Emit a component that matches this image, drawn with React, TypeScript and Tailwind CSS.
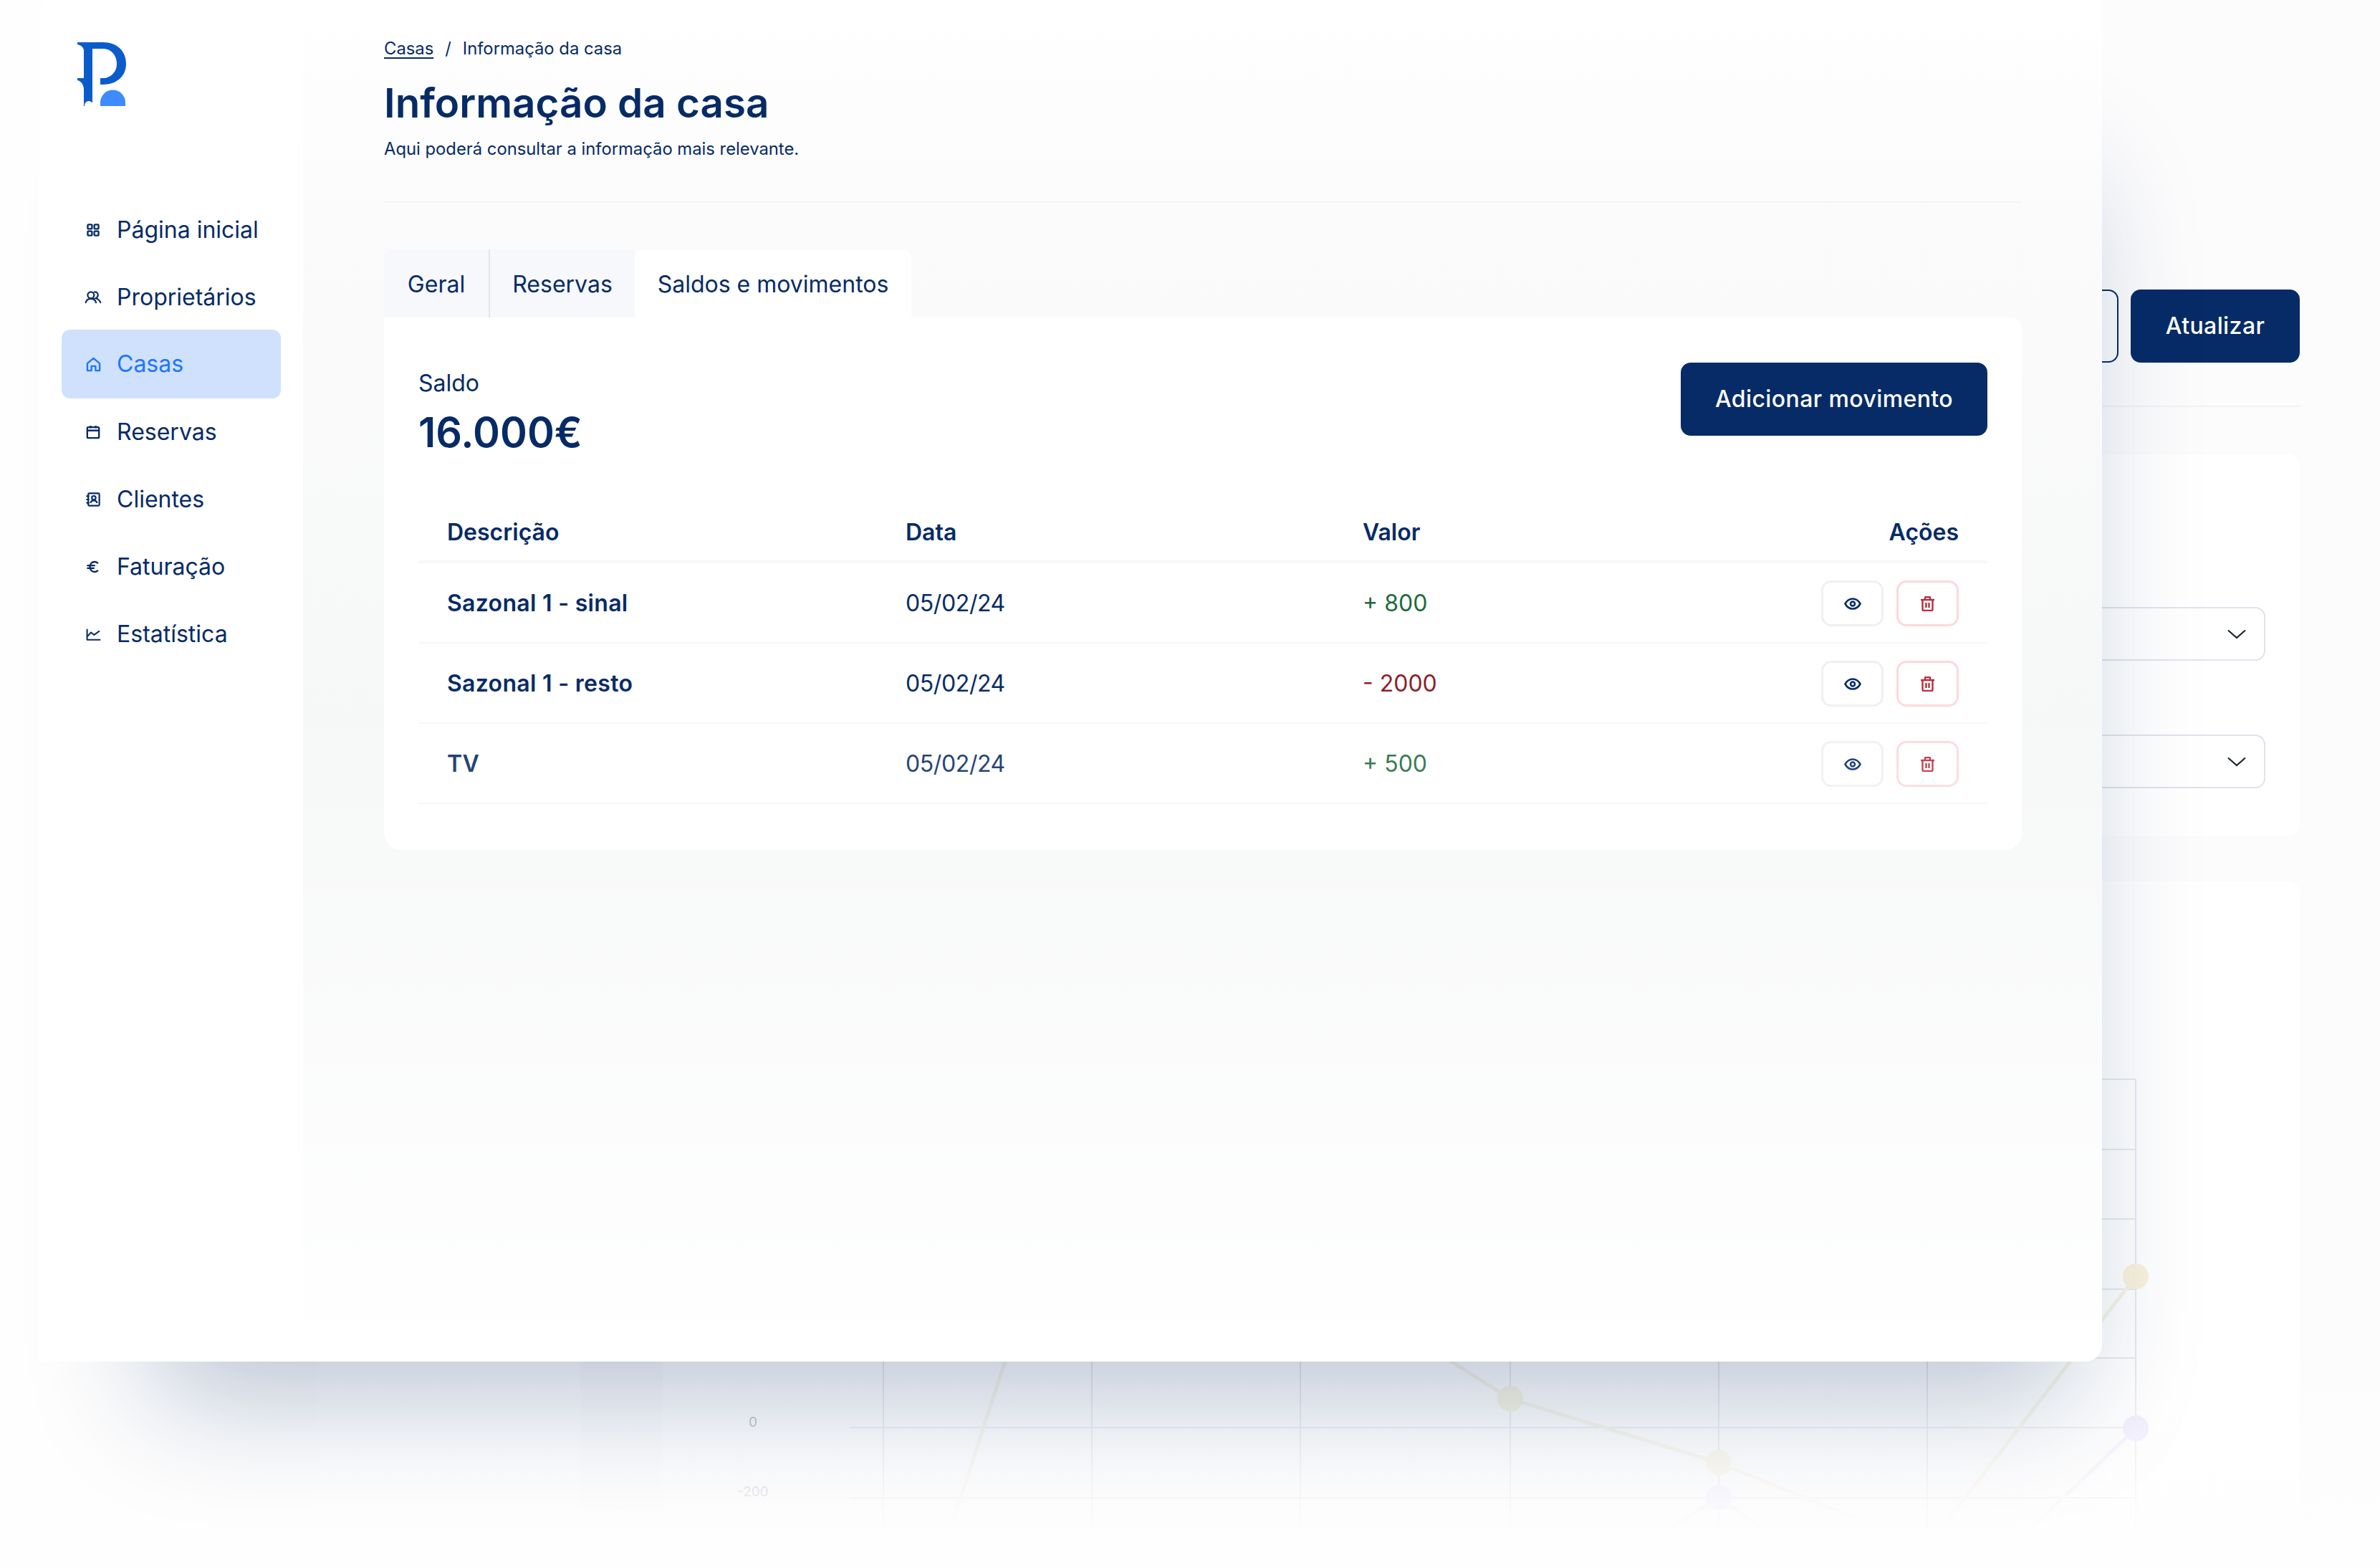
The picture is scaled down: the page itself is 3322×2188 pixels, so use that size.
import React from "react";

const NAVY = "#062b66";

function Logo() {
  return (
    <svg width="68" height="89" viewBox="0 0 68 89" className="block">
      <path
        fill="#0b5ccb"
        d="M0 0H36C55 0 68 12 68 30C68 48 54 59 36 59H32V50H36C46 50 55 42 55 30C55 18 47 9 36 9H21V89H9V66C9 59 5 54 0 53V50H9V12C9 7 5 4 0 3Z"
      />
      <circle cx="16" cy="88" r="6" fill="#ffffff" />
      <path fill="#3d8bff" d="M32 89V84A17.5 17.5 0 0 1 67 84V89Z" />
    </svg>
  );
}

type IconProps = { color?: string };

function GridIcon({ color = NAVY }: IconProps) {
  return (
    <svg width="18" height="18" viewBox="0 0 20 20" fill="none" stroke={color} strokeWidth="2.6">
      <rect x="1.6" y="1.6" width="6.6" height="6.6" rx="1" />
      <rect x="11.8" y="1.6" width="6.6" height="6.6" rx="1" />
      <rect x="1.6" y="11.8" width="6.6" height="6.6" rx="1" />
      <rect x="11.8" y="11.8" width="6.6" height="6.6" rx="1" />
    </svg>
  );
}

function UsersIcon({ color = NAVY }: IconProps) {
  return (
    <svg width="24" height="18" viewBox="0 0 26 20" fill="none" stroke={color} strokeWidth="2.4" strokeLinecap="round">
      <circle cx="9.5" cy="6.5" r="5" />
      <path d="M1.5 18C2.5 14 5.5 12 9.5 12S16.5 14 17.5 18" />
      <path d="M15 1.6C18 1 20.5 3.2 20.5 6.2C20.5 8.8 19 10.6 16.8 11.4C20 12 23 14.4 24.5 18" />
    </svg>
  );
}

function HomeIcon({ color = NAVY }: IconProps) {
  return (
    <svg width="21" height="21" viewBox="0 0 22 22" fill="none" stroke={color} strokeWidth="2.5" strokeLinejoin="round">
      <path d="M2 9.5L11 2L20 9.5V20H14V13.5H8V20H2Z" />
    </svg>
  );
}

function CalendarIcon({ color = NAVY }: IconProps) {
  return (
    <svg width="20" height="20" viewBox="0 0 22 22" fill="none" stroke={color} strokeWidth="2.6">
      <rect x="2" y="3.5" width="18" height="16.5" rx="1.5" />
      <path d="M2 8.5H20M7 1V5M15 1V5" />
    </svg>
  );
}

function ContactIcon({ color = NAVY }: IconProps) {
  return (
    <svg width="20" height="20" viewBox="0 0 22 22" fill="none" stroke={color} strokeWidth="2.4">
      <rect x="3.5" y="1.5" width="17" height="19" rx="1.5" />
      <circle cx="12" cy="8.5" r="3" />
      <path d="M7 16.5C7.5 13.5 9.5 12.5 12 12.5S16.5 13.5 17 16.5M0.5 6H5M0.5 11H5M0.5 16H5" />
    </svg>
  );
}

function EuroIcon({ color = NAVY }: IconProps) {
  return (
    <svg width="18" height="18" viewBox="0 0 20 20" fill="none" stroke={color} strokeWidth="2.6" strokeLinecap="round">
      <path d="M17 4C15.6 2.8 14 2.2 12.2 2.2C8 2.2 5 5.6 5 10S8 17.8 12.2 17.8C14 17.8 15.6 17.2 17 16" />
      <path d="M1.5 8H12M1.5 12H11" />
    </svg>
  );
}

function ChartIcon({ color = NAVY }: IconProps) {
  return (
    <svg width="21" height="17" viewBox="0 0 24 20" fill="none" stroke={color} strokeWidth="2.4" strokeLinejoin="round">
      <path d="M1.5 1V18.5H23.5" />
      <path d="M2 13L8 6.5L13 10.5L22 4" />
    </svg>
  );
}

function EyeIcon() {
  return (
    <svg width="24" height="17" viewBox="0 0 24 17" fill="none" stroke={NAVY} strokeWidth="2.6">
      <path d="M1.5 8.5C4 4 7.5 1.5 12 1.5S20 4 22.5 8.5C20 13 16.5 15.5 12 15.5S4 13 1.5 8.5Z" />
      <circle cx="12" cy="8.5" r="3" />
    </svg>
  );
}

function TrashIcon() {
  return (
    <svg width="19" height="21" viewBox="0 0 19 21" fill="none" stroke="#b92c3c" strokeWidth="2.4">
      <path d="M0 5H19" />
      <path d="M6 4.5V2C6 1.4 6.4 1 7 1H12C12.6 1 13 1.4 13 2V4.5" />
      <path d="M2.5 5V18.5C2.5 19.3 3 20 4 20H15C16 20 16.5 19.3 16.5 18.5V5" />
      <path d="M7.5 9V16M11.5 9V16" />
    </svg>
  );
}

function Chevron() {
  return (
    <svg width="26" height="14" viewBox="0 0 26 14" fill="none" stroke="#1c2430" strokeWidth="2.2">
      <path d="M1 1.5L13 12L25 1.5" />
    </svg>
  );
}

const nav = [
  { label: "Página inicial", Icon: GridIcon },
  { label: "Proprietários", Icon: UsersIcon },
  { label: "Casas", Icon: HomeIcon, active: true },
  { label: "Reservas", Icon: CalendarIcon },
  { label: "Clientes", Icon: ContactIcon },
  { label: "Faturação", Icon: EuroIcon },
  { label: "Estatística", Icon: ChartIcon },
];

const rows = [
  { d: "Sazonal 1 - sinal", date: "05/02/24", v: "+ 800", c: "text-[#1d6a3b]" },
  { d: "Sazonal 1 - resto", date: "05/02/24", v: "- 2000", c: "text-[#8f1d2b]" },
  { d: "TV", date: "05/02/24", v: "+ 500", c: "text-[#1d6a3b]" },
];

function BackChart() {
  const hs = [7, 105, 202, 300, 396, 493, 591];
  const vs = [233, 524, 815, 1108, 1399, 1690, 1981];
  return (
    <svg width="2000" height="688" viewBox="0 0 2000 688" className="block" fill="none">
      {hs.map((y) => (
        <path key={y} d={`M186 ${y}H1981`} stroke="#e6e9ee" strokeWidth="2" />
      ))}
      {vs.map((x) => (
        <path key={x} d={`M${x} 7V688`} stroke="#e6e9ee" strokeWidth="2" />
      ))}
      <path d="M403 400L315 670" stroke="#f8f5e8" strokeWidth="5" />
      <path d="M930 340L1108 453L1399 542L1690 660" stroke="#f8f5e6" strokeWidth="5" />
      <path d="M1690 660L1981 282" stroke="#f8f5e6" strokeWidth="5" />
      <path d="M1981 494L1778 688M1399 591L1248 688M1399 591L1537 688" stroke="#f0eefc" strokeWidth="5" />
      <circle cx="1981" cy="282" r="18" fill="#f9f3dc" />
      <circle cx="1108" cy="453" r="18" fill="#f8f5e0" />
      <circle cx="1399" cy="542" r="18" fill="#f9f5e2" />
      <circle cx="1981" cy="494" r="18" fill="#eceafd" />
      <circle cx="1399" cy="591" r="18" fill="#eceafd" />
      <text x="51" y="492" textAnchor="middle" fontSize="19" fill="#a6acb5" fontFamily="Inter, sans-serif">0</text>
      <text x="51" y="589" textAnchor="middle" fontSize="19" fill="#a6acb5" fontFamily="Inter, sans-serif">-200</text>
    </svg>
  );
}

function BackWindow() {
  return (
    <div className="absolute inset-0 flex flex-col items-end pl-[443px] pr-[112px] pt-[404px]">
      <div className="flex gap-[17px] h-[102px]">
        <div className="w-[300px] rounded-[14px] border-2 border-[#062b66]" />
        <div className="w-[236px] rounded-[14px] bg-[#062b66] text-white text-[32px] tracking-[0.4px] font-medium flex items-center justify-center">
          Atualizar
        </div>
      </div>
      <div className="mt-[60px] w-full h-[2px] bg-[#f1f2f5]" />
      <div className="mt-[66px] w-full h-[532px] rounded-[16px] bg-white flex flex-col items-end pt-[213px] pr-[48px] gap-[103px] shrink-0">
        {[0, 1].map((i) => (
          <div key={i} className="w-[1000px] h-[75px] rounded-[14px] border-2 border-[#dfe3ec] flex items-center justify-end pr-[25px]">
            <Chevron />
          </div>
        ))}
      </div>
      <div className="mt-[64px] w-full flex-1 flex gap-[115px] min-h-0">
        <div className="w-[367px] bg-white" />
        <div className="flex-1 bg-white rounded-t-[16px] pt-[269px] pl-[75px] overflow-hidden">
          <BackChart />
        </div>
      </div>
    </div>
  );
}

export default function App() {
  return (
    <div className="relative w-[3322px] h-[2188px] overflow-hidden bg-[#fcfcfd] [font-family:Inter,sans-serif] text-[#062b66]">
      <div className="absolute inset-y-0 left-0 w-[443px] bg-[#fefefe]" />
      <BackWindow />
      <div className="absolute left-0 right-0 bottom-0 h-[288px] bg-[linear-gradient(to_bottom,rgba(254,254,254,0),#fefefe_85%)]" />

      <div className="relative flex ml-[54px] w-[2880px] h-[1900px] rounded-tl-[24px] rounded-br-[24px] bg-white shadow-[60px_150px_160px_-100px_rgba(6,43,102,0.28)]">
        <aside className="w-[369px] shrink-0 pt-[59px] pl-[32px] rounded-tl-[24px] bg-white">
          <div className="pl-[22px]">
            <Logo />
          </div>
          <nav className="mt-[126px] w-[306px] flex flex-col">
            {nav.map(({ label, Icon, active }) => (
              <div
                key={label}
                className={
                  active
                    ? "h-[96px] -mt-[2px] flex items-center rounded-[12px] bg-[#cfe1fd] text-[#1f75fe] text-[32px]"
                    : "h-[94px] flex items-center text-[32px]"
                }
              >
                <span className="w-[32px] ml-[28px] mr-[17px] flex justify-center">
                  <Icon color={active ? "#1f75fe" : NAVY} />
                </span>
                {label}
              </div>
            ))}
          </nav>
        </aside>

        <main className="flex-1 pl-[113px] pr-[112px] pt-[51px] rounded-br-[24px] bg-[linear-gradient(to_bottom,#ffffff_0px,#fbfbfc_300px,#f6f7f7_1100px)]">
          <div className="flex items-center h-[34px] text-[23.8px] gap-[16px]">
            <span className="underline underline-offset-[4px]">Casas</span>
            <span>/</span>
            <span>Informação da casa</span>
          </div>
          <h1 className="mt-[24px] text-[56.5px] leading-[70px] font-semibold">Informação da casa</h1>
          <p className="mt-[12px] text-[23.8px] leading-[34px]">Aqui poderá consultar a informação mais relevante.</p>
          <div className="mt-[56px] h-[2px] bg-[#f3f4f5]" />

          <div className="mt-[65px] flex h-[95px] text-[32px]">
            <div className="w-[148px] pt-[2px] bg-[#f6f8fb] rounded-tl-[12px] flex items-center justify-center border-r-2 border-[#e1e5ec]">Geral</div>
            <div className="w-[202px] pt-[2px] bg-[#f6f8fb] flex items-center justify-center">Reservas</div>
            <div className="w-[386px] pt-[2px] bg-white rounded-t-[12px] flex items-center justify-center">Saldos e movimentos</div>
          </div>

          <section className="h-[743px] bg-white rounded-b-[24px] rounded-tr-[16px] pl-[48px] pr-[48px] pt-[63px]">
            <div className="flex justify-between items-start h-[130px]">
              <div className="pt-[9px]">
                <div className="text-[32px] leading-[40px]">Saldo</div>
                <div className="mt-[15px] text-[57.5px] leading-[66px] font-semibold">16.000€</div>
              </div>
              <div className="w-[428px] h-[102px] rounded-[14px] bg-[#062b66] text-white text-[32px] tracking-[0.4px] font-medium flex items-center justify-center">
                Adicionar movimento
              </div>
            </div>

            <div className="mt-[64px] h-[86px] pt-[4px] px-[40px] grid grid-cols-[640px_638px_1fr_auto] items-center text-[32px] font-semibold border-b-4 border-[#f6f7f9]">
              <div>Descrição</div>
              <div>Data</div>
              <div>Valor</div>
              <div>Ações</div>
            </div>
            {rows.map((r) => (
              <div key={r.d} className="h-[112px] pt-[2px] px-[40px] grid grid-cols-[640px_638px_1fr_auto] items-center text-[32px] border-b-2 border-[#f6f7f9]">
                <div className="font-semibold tracking-[0.3px]">{r.d}</div>
                <div className="tracking-[-0.4px]">{r.date}</div>
                <div className={r.c}>{r.v}</div>
                <div className="flex gap-[18px]">
                  <div className="w-[87px] h-[64px] rounded-[14px] border-[3px] border-[#eff0f2] flex items-center justify-center">
                    <EyeIcon />
                  </div>
                  <div className="w-[87px] h-[64px] rounded-[14px] border-[3px] border-[#fbd9dc] flex items-center justify-center">
                    <TrashIcon />
                  </div>
                </div>
              </div>
            ))}
          </section>
        </main>
        <div className="absolute inset-0 rounded-br-[24px] pointer-events-none bg-[linear-gradient(to_bottom,rgba(255,255,255,0)_50%,#ffffff_100%)]" />
      </div>
    </div>
  );
}
